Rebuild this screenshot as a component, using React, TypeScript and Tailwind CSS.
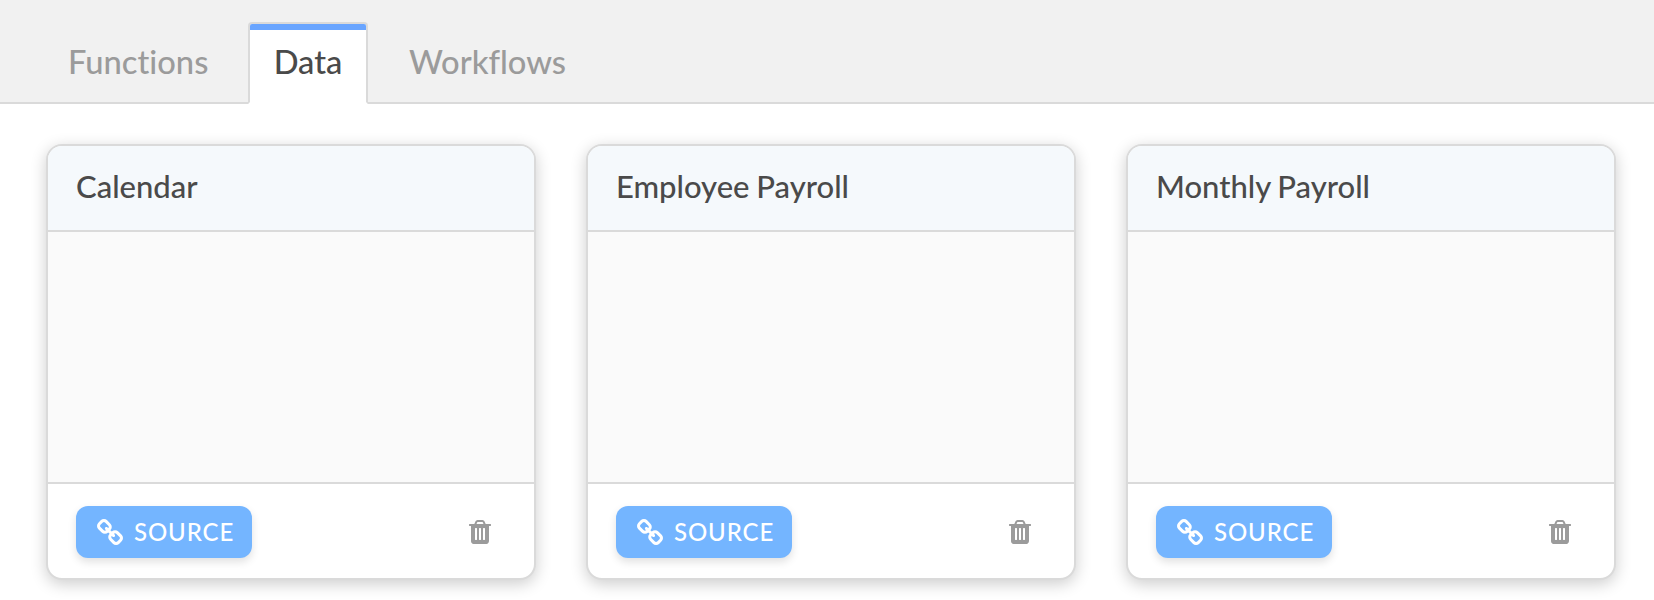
const tabs = ["Functions", "Data", "Workflows"];
const cards = ["Calendar", "Employee Payroll", "Monthly Payroll"];

function LinkIcon() {
  return (
    <svg viewBox="16 16 1632 1632" className="block size-[26px]" fill="currentColor">
      <path d="M1456 1216q0-40-28-68l-208-208q-28-28-68-28-42 0-72 32 3 3 19 18.5t21.5 21.5 15 19 13 25.5 3.5 27.5q0 40-28 68t-68 28q-15 0-27.5-3.5t-25.5-13-19-15-21.5-21.5-18.5-19q-33 31-33 73 0 40 28 68l206 207q27 27 68 27 40 0 68-26l147-146q28-28 28-67zm-703-705q0-40-28-68l-206-207q-28-28-68-28-39 0-68 27l-147 146q-28 28-28 67 0 40 28 68l208 208q27 27 68 27 42 0 72-31-3-3-19-18.5t-21.5-21.5-15-19-13-25.5-3.5-27.5q0-40 28-68t68-28q15 0 27.5 3.5t25.5 13 19 15 21.5 21.5 18.5 19q33-31 33-73zm895 705q0 120-85 203l-147 146q-83 83-203 83-121 0-204-85l-206-207q-83-83-83-203 0-123 88-209l-88-88q-86 88-208 88-120 0-204-84l-208-208q-84-84-84-204t85-203l147-146q83-83 203-83 121 0 204 85l206 207q83 83 83 203 0 123-88 209l88 88q86-88 208-88 120 0 204 84l208 208q84 84 84 204z" />
    </svg>
  );
}

function TrashIcon() {
  return (
    <svg viewBox="192 128 1408 1536" className="block h-6 w-[22px]" fill="currentColor">
      <path d="M704 1376v-704q0-14-9-23t-23-9h-64q-14 0-23 9t-9 23v704q0 14 9 23t23 9h64q14 0 23-9t9-23zm256 0v-704q0-14-9-23t-23-9h-64q-14 0-23 9t-9 23v704q0 14 9 23t23 9h64q14 0 23-9t9-23zm256 0v-704q0-14-9-23t-23-9h-64q-14 0-23 9t-9 23v704q0 14 9 23t23 9h64q14 0 23-9t9-23zm-544-992h448l-48-117q-7-9-17-11h-317q-10 2-17 11zm928 32v64q0 14-9 23t-23 9h-96v948q0 83-47 143.5t-113 60.5h-832q-66 0-113-58.5t-47-141.5v-952h-96q-14 0-23-9t-9-23v-64q0-14 9-23t23-9h309l70-167q15-37 54-63t79-26h320q40 0 79 26t54 63l70 167h309q14 0 23 9t9 23z" />
    </svg>
  );
}

function Tab({ label, active }: { label: string; active: boolean }) {
  return active ? (
    <button className="-mb-0.5 flex h-[82px] w-[120px] flex-col overflow-hidden rounded-t border-2 border-[#dadada] border-b-white bg-white text-[#4a4a4a]">
      <span className="h-1.5 w-full bg-[#69a5ff]" />
      <span className="w-full pt-[9px] text-center">{label}</span>
    </button>
  ) : (
    <button className="flex h-20 justify-center px-5 pt-[17px] text-[#9b9b9b]">{label}</button>
  );
}

function Card({ title }: { title: string }) {
  return (
    <section className="flex h-[436px] w-[490px] flex-col overflow-hidden rounded-2xl border-2 border-[#dadada] bg-white shadow-[0_4px_16px_rgba(0,0,0,0.2)]">
      <header className="h-[86px] border-b-2 border-[#dadada] bg-[#f5f9fc] px-7 pt-5 text-[31px] leading-10 font-medium [word-spacing:-1px] text-[#4a4a4a]">
        {title}
      </header>
      <div className="h-[252px] border-b-2 border-[#dadada] bg-[#fafafa]" />
      <footer className="flex items-start justify-between pt-[22px] pr-[43px] pl-7">
        <button className="flex h-[52px] w-[176px] items-center rounded-xl bg-[#74b5ff] pl-[21px] text-white shadow-[0_4px_8px_rgba(0,0,0,0.12)]">
          <LinkIcon />
          <span className="ml-[11px] text-2xl font-medium tracking-[0.9px]">SOURCE</span>
        </button>
        <button aria-label={`Delete ${title}`} className="mt-[14px] text-[#9b9b9b]">
          <TrashIcon />
        </button>
      </footer>
    </section>
  );
}

export default function App() {
  return (
    <div className="h-[600px] w-[1654px] overflow-hidden bg-white font-[Lato,sans-serif]">
      <nav className="flex h-[104px] items-start border-b-2 border-[#dadada] bg-[#f1f1f1] pt-[22px] text-[32.7px] leading-[46px] font-medium [font-variant-ligatures:none]">
        <div className="flex w-[248px] pl-[48px]">
          <Tab label={tabs[0]} active={false} />
        </div>
        <Tab label={tabs[1]} active />
        <div className="pl-[21px]">
          <Tab label={tabs[2]} active={false} />
        </div>
      </nav>
      <main className="flex gap-[50px] pt-10 pl-[46px]">
        {cards.map((title) => (
          <Card key={title} title={title} />
        ))}
      </main>
    </div>
  );
}
